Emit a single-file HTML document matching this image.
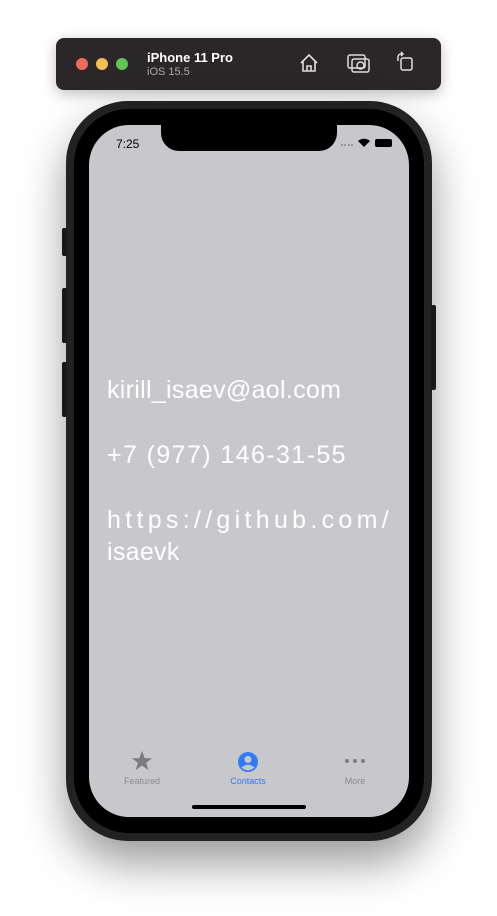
<!DOCTYPE html>
<html><head><style>
*{margin:0;padding:0;box-sizing:border-box}
body{width:497px;height:916px;background:#fff;position:relative;overflow:hidden;font-family:"Liberation Sans",sans-serif}
.bar{position:absolute;left:56px;top:38px;width:385px;height:52px;background:#2b2729;border-radius:8px;box-shadow:0 4px 14px rgba(0,0,0,.25)}
.dot{position:absolute;top:20px;width:12px;height:12px;border-radius:50%}
.phone{position:absolute;left:66px;top:101px;width:366px;height:740px;background:#222;border-radius:62px;box-shadow:0 22px 45px rgba(0,0,0,.4)}
.bez{position:absolute;left:74px;top:109px;width:350px;height:724px;background:#000;border-radius:55px}
.scr{position:absolute;left:89px;top:125px;width:320px;height:692px;background:#c8c7cc;border-radius:40px;overflow:hidden}
.notch{position:absolute;left:72px;top:0;width:176px;height:26px;background:#000;border-radius:0 0 18px 18px}
.btn{position:absolute;background:#1a1a1a;width:5px;border-radius:2px}
.t{position:absolute;left:18px;color:#fff;font-size:25px;letter-spacing:.3px}
.lbl{position:absolute;top:651px;font-size:9px;color:#8a8a8e;width:80px;text-align:center}
</style></head><body>
<div class="bar">
<div class="dot" style="left:20px;background:#ec6a5e"></div>
<div class="dot" style="left:40px;background:#f4bf4f"></div>
<div class="dot" style="left:60px;background:#61c554"></div>
<div style="position:absolute;left:91px;top:12px;color:#fff;font-weight:bold;font-size:13px">iPhone 11 Pro</div>
<div style="position:absolute;left:91px;top:28px;color:#aaa;font-size:11px">iOS 15.5</div>
<svg style="position:absolute;left:242px;top:14px" width="22" height="22" viewBox="0 0 22 22" fill="none" stroke="#ddd" stroke-width="1.6"><path d="M3 11L11 3L19 11M5 9V19H17V9M9 19V14H13V19"/></svg>
<svg style="position:absolute;left:291px;top:14px" width="24" height="22" viewBox="0 0 24 22" fill="none" stroke="#ddd" stroke-width="1.5"><rect x="1" y="3" width="17" height="13" rx="2"/><rect x="5" y="7" width="17" height="13" rx="2"/><circle cx="13.5" cy="13.5" r="3.5"/></svg>
<svg style="position:absolute;left:338px;top:13px" width="22" height="22" viewBox="0 0 22 22" fill="none" stroke="#ddd" stroke-width="1.5"><rect x="7" y="7" width="11" height="12" rx="2"/><path d="M4 10V6A3 3 0 0 1 7 3H9M7 1L9 3L7 5"/></svg>
</div>
<div class="phone"></div>
<div class="btn" style="left:62px;top:228px;height:28px"></div>
<div class="btn" style="left:62px;top:288px;height:55px"></div>
<div class="btn" style="left:62px;top:362px;height:55px"></div>
<div class="btn" style="left:431px;top:305px;height:85px"></div>
<div class="bez"></div>
<div class="scr">
<div class="notch"></div>
<div style="position:absolute;left:27px;top:12px;font-size:12px;color:#000">7:25</div>
<div style="position:absolute;left:252px;top:19px;width:12px;height:2px;border-top:2px dotted #999"></div>
<svg style="position:absolute;left:268px;top:13px" width="14" height="10" viewBox="0 0 14 10"><path d="M7 9L1 3A9 9 0 0 1 13 3Z" fill="#000"/></svg>
<div style="position:absolute;left:286px;top:14px;width:17px;height:8px;background:#000;border-radius:2px"></div>
<div class="t" style="top:251px">kirill_isaev@aol.com</div>
<div class="t" style="top:316px;letter-spacing:1.4px">+7 (977) 146-31-55</div>
<div class="t" style="top:381px;letter-spacing:4.3px">https://github.com/</div>
<div class="t" style="top:413px">isaevk</div>
<svg style="position:absolute;left:41px;top:625px" width="24" height="22" viewBox="0 0 24 24"><path d="M12 1L15 9H23L16.5 14L19 22L12 17L5 22L7.5 14L1 9H9Z" fill="#7c7c80"/></svg>
<div class="lbl" style="left:13px">Featured</div>
<svg style="position:absolute;left:148px;top:626px" width="22" height="22" viewBox="0 0 22 22"><circle cx="11" cy="11" r="10" fill="#2f7cf6"/><circle cx="11" cy="8.5" r="3.5" fill="#c8c7cc"/><path d="M4.5 16.5Q11 11 17.5 16.5Q11 22 4.5 16.5Z" fill="#c8c7cc"/></svg>
<div class="lbl" style="left:119px;color:#2f7cf6">Contacts</div>
<svg style="position:absolute;left:255px;top:633px" width="22" height="6"><circle cx="3" cy="3" r="2" fill="#7c7c80"/><circle cx="11" cy="3" r="2" fill="#7c7c80"/><circle cx="19" cy="3" r="2" fill="#7c7c80"/></svg>
<div class="lbl" style="left:226px">More</div>
<div style="position:absolute;left:103px;top:680px;width:114px;height:4px;background:#000;border-radius:2px"></div>
</div>
</body></html>
